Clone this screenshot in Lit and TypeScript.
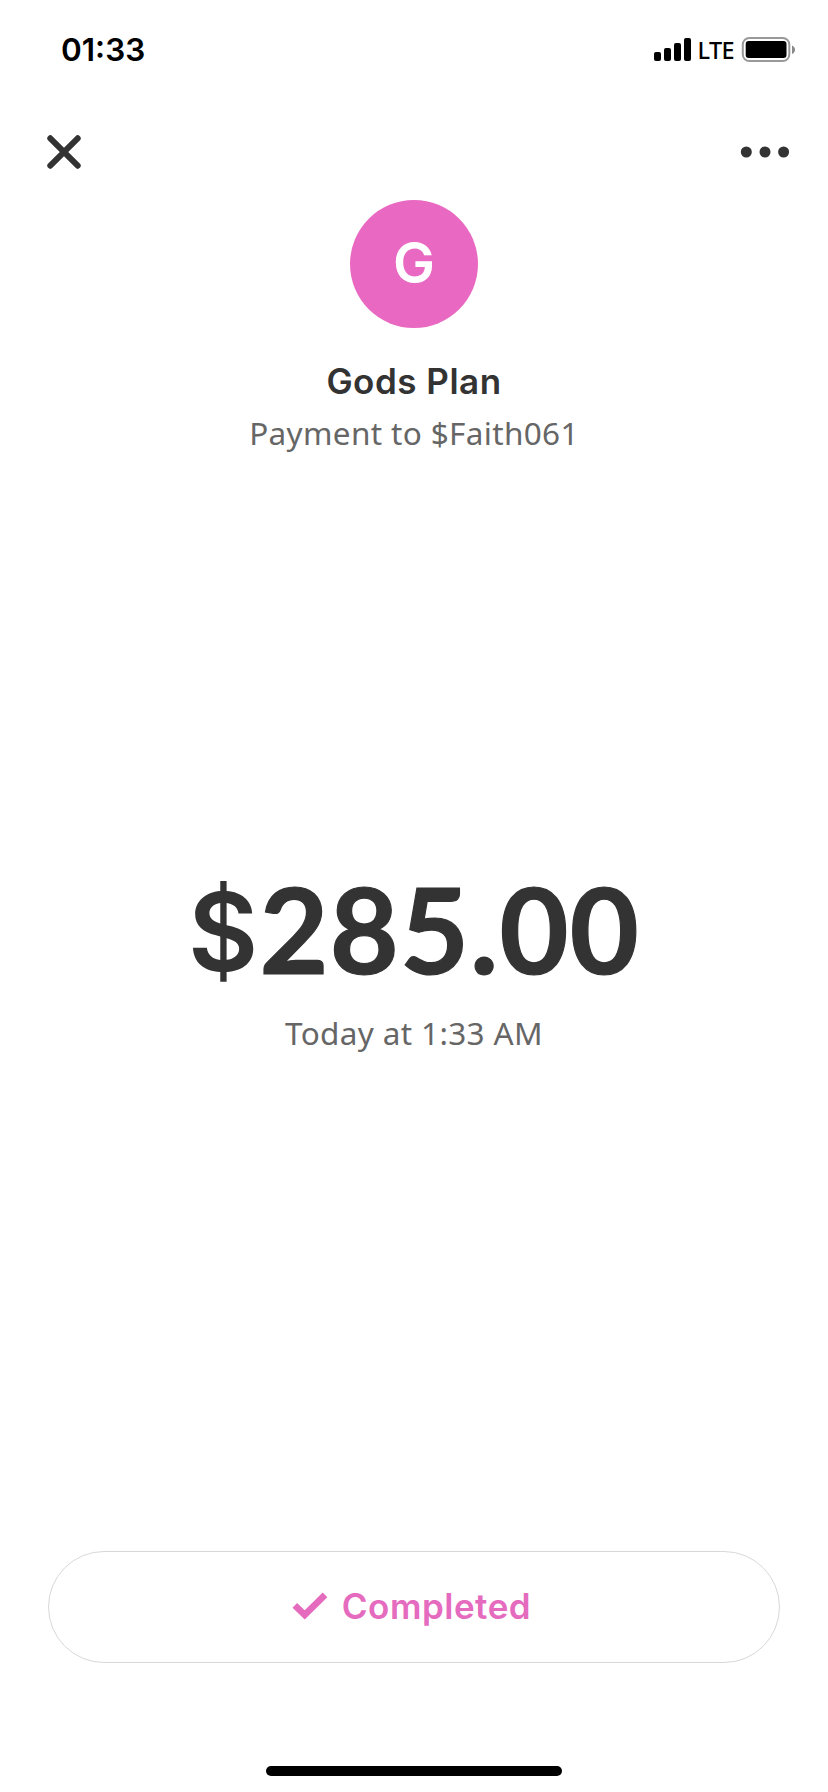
import { LitElement, html, css } from "lit";
import { customElement, property } from "lit/decorators.js";

@customElement("status-bar")
class StatusBar extends LitElement {
  @property() time = "";
  static styles = css`
    :host { display: flex; justify-content: space-between; height: 88px; padding: 0 32px 0 61px; box-sizing: border-box; color: #000; font-family: Inter, sans-serif; }
    .time { font-size: 31.5px; font-weight: 600; line-height: 40px; padding-top: 30px; }
    .right { display: flex; align-items: flex-start; padding-top: 36px; }
    .bars { margin-top: 2px; margin-right: 7px; }
    .net { font-family: "Noto Sans", sans-serif; font-size: 23.5px; font-weight: 500; line-height: 28px; width: 43.5px; letter-spacing: -0.6px; }
    svg { display: block; }
  `;
  render() {
    return html`
      <div class="time">${this.time}</div>
      <div class="right">
        <svg class="bars" width="37" height="23" viewBox="0 0 37 23">
          <rect x="0" y="14" width="7" height="9" rx="2" />
          <rect x="10" y="10" width="7" height="13" rx="2" />
          <rect x="20" y="5" width="7" height="18" rx="2" />
          <rect x="30" y="0" width="7" height="23" rx="2" />
        </svg>
        <div class="net">LTE</div>
        <svg width="55" height="27" viewBox="0 0 55 27">
          <rect x="1.8" y="2" width="46.5" height="23" rx="6.5" fill="none" stroke="#999" stroke-width="2" />
          <rect x="4.7" y="5" width="40.8" height="17" rx="3" />
          <path d="M51 9.5c4 1.5 4 7 0 8.5z" fill="#888" />
        </svg>
      </div>
    `;
  }
}

@customElement("app-root")
class AppRoot extends LitElement {
  static styles = css`
    :host { display: flex; flex-direction: column; width: 828px; height: 1792px; background: #fff; color: #333; font-family: Inter, sans-serif; overflow: hidden; }
    .nav { display: flex; justify-content: space-between; align-items: center; height: 128px; margin-bottom: -16px; padding: 0 37.5px 0 46px; flex: none; box-sizing: border-box; }
    .person { display: flex; flex-direction: column; align-items: center; height: 657px; flex: none; }
    .avatar { width: 128px; height: 128px; border-radius: 50%; background: #e969c2; color: #fff; font-size: 56px; font-weight: 600; line-height: 127px; text-align: center; margin-bottom: 29px; }
    .name { font-size: 35px; font-weight: 600; line-height: 48px; margin-bottom: 6px; letter-spacing: 0.5px; }
    .sub { font-family: "Noto Sans", sans-serif; font-size: 31.5px; line-height: 44px; color: #666; letter-spacing: 0.35px; }
    .money { display: flex; flex-direction: column; align-items: center; height: 694px; flex: none; }
    .amount { font-family: Lato, sans-serif; font-size: 119px; font-weight: 700; line-height: 142px; margin-bottom: 12px; letter-spacing: 1.2px; white-space: nowrap; -webkit-text-stroke: 1.2px #333; }
    .cur { font-family: Inter, sans-serif; font-size: 108px; font-weight: 600; line-height: 0; position: relative; top: -3px; -webkit-text-stroke: 0; }
    .done { display: flex; align-items: center; justify-content: center; height: 112px; margin: 0 48px; padding-bottom: 3px; box-sizing: border-box; border: 1px solid #d8d8d8; border-radius: 56px; color: #e56bbf; font-size: 35px; font-weight: 600; letter-spacing: 0.5px; gap: 14px; flex: none; }
    .done svg { margin-left: -5px; }
    .home { width: 296px; height: 10px; border-radius: 5px; background: #000; margin: 103px auto 0; flex: none; }
    svg { display: block; }
  `;
  render() {
    return html`
      <status-bar time="01:33"></status-bar>
      <div class="nav">
        <svg width="36" height="36" viewBox="0 0 36 36" stroke="#333" stroke-width="6" stroke-linecap="round">
          <path d="M4.3 4.3L31.7 31.7M31.7 4.3L4.3 31.7" />
        </svg>
        <svg width="52" height="12" viewBox="0 0 52 12" fill="#333">
          <circle cx="7.3" cy="6" r="5.5" /><circle cx="26" cy="6" r="5.5" /><circle cx="44.6" cy="6" r="5.5" />
        </svg>
      </div>
      <div class="person">
        <div class="avatar">G</div>
        <div class="name">Gods Plan</div>
        <div class="sub">Payment to $Faith061</div>
      </div>
      <div class="money">
        <div class="amount"><span class="cur">$</span>285.00</div>
        <div class="sub">Today at 1:33 AM</div>
      </div>
      <div class="done">
        <svg width="36" height="28" viewBox="0 0 36 28" fill="none" stroke="#e56bbf" stroke-width="6.6">
          <path d="M2.8 13.3L12.7 22.8L33 2.8" />
        </svg>
        <span>Completed</span>
      </div>
      <div class="home"></div>
    `;
  }
}
